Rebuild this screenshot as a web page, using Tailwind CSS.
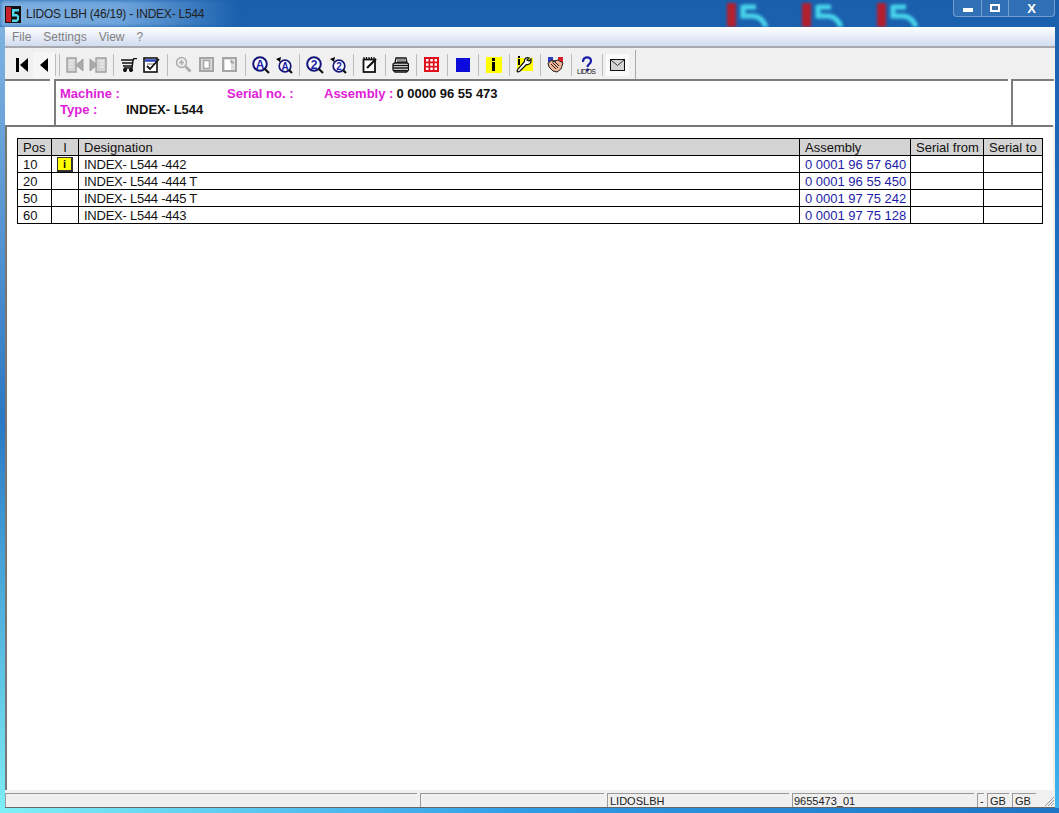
<!DOCTYPE html>
<html lang="en">
<head>
<meta charset="UTF-8">
<title>LIDOS LBH (46/19) - INDEX- L544</title>
<script src="https://cdn.jsdelivr.net/npm/@tailwindcss/browser@4"></script>
</head>
<body class="m-0 overflow-hidden bg-[#1b6fc0]">
<div class="relative w-[1059px] h-[813px] overflow-hidden flex flex-col font-['Liberation_Sans',Arial,sans-serif] text-[12px] text-black bg-gradient-to-b from-[#1a5fad] via-[#1f78c8] to-[#3fb4ec]">

  <!-- glass reflections behind the window -->
  <div class="absolute left-0 top-[27px] w-[5px] h-[786px] bg-gradient-to-b from-[#7fb2e0] via-[#2a78c4] to-[#7eeef5]"></div>
  <div class="absolute left-0 bottom-0 w-[1059px] h-[5px] bg-gradient-to-r from-[#7ff0f5] via-[#2f9be6] to-[#1d74c4]"></div>
  <div class="absolute left-[0px] top-[0px] w-[240px] h-[27px] bg-gradient-to-r from-[#7fb0e0] via-[#6fa5dc] to-transparent blur-[2px]"></div>
  <svg class="absolute left-[725px] top-0 w-[45px] h-[27px] blur-[1.5px]" viewBox="0 0 45 27" fill="none"><rect x="2" y="3" width="9" height="24" fill="#b3202e"/><path d="M18 7H31M18 5V16H27Q37 16 41 27" stroke="#48d5ec" stroke-width="5"/></svg>
  <svg class="absolute left-[800px] top-0 w-[45px] h-[27px] blur-[1.5px]" viewBox="0 0 45 27" fill="none"><rect x="2" y="3" width="9" height="24" fill="#b3202e"/><path d="M18 7H31M18 5V16H27Q37 16 41 27" stroke="#48d5ec" stroke-width="5"/></svg>
  <svg class="absolute left-[875px] top-0 w-[45px] h-[27px] blur-[1.5px]" viewBox="0 0 45 27" fill="none"><rect x="2" y="3" width="9" height="24" fill="#b3202e"/><path d="M18 7H31M18 5V16H27Q37 16 41 27" stroke="#48d5ec" stroke-width="5"/></svg>

  <!-- title bar -->
  <div class="relative h-[27px] shrink-0 flex items-center pl-[5px]">
    <svg class="w-[16px] h-[17px] mt-[1px]" viewBox="0 0 16 17"><rect x="0" y="0" width="16" height="17" fill="#111"/><rect x="1" y="1" width="5" height="15" fill="#c8202a"/><path d="M7 3h7v2.500H9.500v2.500H12l2 2v4l-2 2H7v-2.500h4.500l.5-.5v-2l-.5-.5H7z" fill="#52d8ea"/></svg>
    <span class="ml-[5px] text-[12px] tracking-[-0.23px] text-[#222] mt-[1px]">LIDOS LBH (46/19) - INDEX- L544</span>
    <!-- window buttons -->
    <div class="absolute right-[4px] top-0 w-[102px] h-[17px] flex rounded-b-[4px] border border-t-0 border-[#8fb3d8]/70 bg-white/10">
      <div class="w-[28px] flex items-center justify-center border-r border-[#8fb3d8]/70"><div class="w-[10px] h-[4px] mt-[4px] bg-white"></div></div>
      <div class="w-[27px] flex items-center justify-center border-r border-[#8fb3d8]/70"><div class="w-[10px] h-[8px] border-2 border-white bg-[#3a6fa8]"></div></div>
      <div class="flex-1 flex items-center justify-center text-white font-bold text-[13px] leading-none">X</div>
    </div>
  </div>

  <!-- window -->
  <div class="relative ml-[5px] w-[1050px] h-[781px] shrink-0 flex flex-col bg-[#f0f0f0]">
    <!-- menu -->
    <div class="h-[21px] shrink-0 flex items-center pl-[7px] gap-[12px] bg-gradient-to-b from-[#fdfeff] to-[#d2dcef] border-b-2 border-[#a7a9ad] text-[#808080] text-[12px]">
      <span>File</span><span>Settings</span><span>View</span><span>?</span>
    </div>

    <!-- toolbar -->
    <div class="h-[31px] shrink-0 flex items-center pl-[5px] pt-[2px] bg-[#f0f0f0]">
      <div class="w-[23px] h-[24px] flex items-center justify-center">
        <svg class="w-[14px] h-[16px]" viewBox="0 0 14 16"><rect x="1" y="1" width="3" height="14"/><path d="M13 1v14L5 8z"/></svg>
      </div>
      <div class="w-[22px] h-[26px] flex items-center justify-center bg-white/40">
        <svg class="w-[10px] h-[16px]" viewBox="0 0 10 16"><path d="M9 1v14L1 8z"/></svg>
      </div>
      <div class="w-[1px] h-[22px] bg-[#bbb]"></div>
      <div class="w-[1px] h-[22px] ml-[3px] mr-[3px] bg-[#bbb]"></div>

      <div class="w-[23px] flex justify-center"><svg class="w-[18px] h-[18px]" viewBox="0 0 18 18" fill="none" stroke="#a0a0a0"><path d="M1 2h9v14H1z" fill="#d4d4d4" stroke-width="1.400"/><path d="M3 5h5M3 8h4M3 11h4" stroke="#f4f4f4" stroke-width="1.200"/><path d="M17 3v12l-7-6z" fill="#aaa"/></svg></div>
      <div class="w-[23px] flex justify-center"><svg class="w-[18px] h-[18px]" viewBox="0 0 18 18" fill="none" stroke="#a0a0a0"><path d="M7 2h10v14H7z" fill="#d4d4d4" stroke-width="1.400"/><path d="M10 5h5M11 8h4M11 11h4" stroke="#f4f4f4" stroke-width="1.200"/><path d="M1 3v12l7-6z" fill="#aaa"/></svg></div>
      <div class="w-[1px] h-[22px] ml-[4px] mr-[3px] bg-[#bbb]"></div>

      <div class="w-[23px] flex justify-center"><svg class="w-[16px] h-[14px]" viewBox="0 0 16 14" fill="none" stroke="#111" stroke-width="1.500"><path d="M0 2h12M1 5h11M2 8h9"/><path d="M12 2l1-1.500h3"/><path d="M12 2l-1 8H3"/><circle cx="4" cy="12" r="1.300" fill="#111"/><circle cx="10" cy="12" r="1.300" fill="#111"/></svg></div>
      <div class="w-[23px] flex justify-center"><svg class="w-[17px] h-[16px]" viewBox="0 0 17 16" fill="none"><rect x="1" y="1" width="13" height="14" stroke="#111" stroke-width="1.600" fill="#fff"/><path d="M2 3.500h11" stroke="#2a3fc0" stroke-width="2.500"/><path d="M4 7h8" stroke="#777"/><path d="M4 9l3 3 9-10" stroke="#111" stroke-width="1.800"/></svg></div>
      <div class="w-[1px] h-[22px] mx-[4px] bg-[#bbb]"></div>

      <div class="w-[23px] flex justify-center"><svg class="w-[17px] h-[17px]" viewBox="0 0 17 17" fill="none" stroke="#aaa"><circle cx="6.500" cy="6.500" r="5" fill="#eee" stroke-width="1.400"/><path d="M4 6.500h5M6.500 4v5" stroke-width="1.500"/><path d="M10.500 10.500l5 5" stroke-width="2.600"/></svg></div>
      <div class="w-[23px] flex justify-center"><svg class="w-[15px] h-[15px]" viewBox="0 0 15 15" fill="none" stroke="#a5a5a5"><rect x="1" y="1" width="13" height="13" stroke-width="2" fill="#dedede"/><rect x="4.500" y="3.500" width="6" height="8" fill="#fff" stroke-width="1.500"/></svg></div>
      <div class="w-[23px] flex justify-center"><svg class="w-[15px] h-[15px]" viewBox="0 0 15 15" fill="none" stroke="#a5a5a5"><rect x="1" y="1" width="13" height="13" stroke-width="2" fill="#dedede"/><path d="M3 3h6v10H3z" fill="#fff" stroke="none"/><path d="M9 3l3 3H9z" fill="#aaa"/></svg></div>
      <div class="w-[1px] h-[22px] ml-[4px] mr-[3px] bg-[#bbb]"></div>

      <div class="w-[23px] flex justify-center"><svg class="w-[18px] h-[18px]" viewBox="0 0 18 18"><circle cx="8" cy="8" r="6.800" fill="#fff" stroke="#14147a" stroke-width="2"/><text x="8" y="12.500" text-anchor="middle" font-size="12" font-weight="700" fill="#1a1ea8" font-family="Liberation Sans">A</text><path d="M12.500 12.500l4.500 4.500" stroke="#111" stroke-width="2.200"/></svg></div>
      <div class="w-[23px] flex justify-center"><svg class="w-[18px] h-[18px]" viewBox="0 0 18 18"><circle cx="10" cy="10" r="5.800" fill="#fff" stroke="#14147a" stroke-width="1.700"/><text x="10" y="13.500" text-anchor="middle" font-size="10" font-weight="700" fill="#1a1ea8" font-family="Liberation Sans">A</text><path d="M14 14l3 3" stroke="#111" stroke-width="2.200"/><path d="M1 3l5-2-1 5z"/></svg></div>
      <div class="w-[1px] h-[22px] ml-[4px] mr-[3px] bg-[#bbb]"></div>

      <div class="w-[23px] flex justify-center"><svg class="w-[18px] h-[18px]" viewBox="0 0 18 18"><circle cx="8" cy="8" r="6.800" fill="#fff" stroke="#14147a" stroke-width="2"/><text x="8" y="12.500" text-anchor="middle" font-size="12" font-weight="700" fill="#1a1ea8" font-family="Liberation Sans">2</text><path d="M12.500 12.500l4.500 4.500" stroke="#111" stroke-width="2.200"/></svg></div>
      <div class="w-[23px] flex justify-center"><svg class="w-[18px] h-[18px]" viewBox="0 0 18 18"><circle cx="10" cy="10" r="5.800" fill="#fff" stroke="#14147a" stroke-width="1.700"/><text x="10" y="13.500" text-anchor="middle" font-size="10" font-weight="700" fill="#1a1ea8" font-family="Liberation Sans">2</text><path d="M14 14l3 3" stroke="#111" stroke-width="2.200"/><path d="M1 3l5-2-1 5z"/></svg></div>
      <div class="w-[1px] h-[22px] mx-[4px] bg-[#bbb]"></div>

      <div class="w-[23px] flex justify-center"><svg class="w-[16px] h-[16px]" viewBox="0 0 16 16" fill="none" stroke="#111"><rect x="1.500" y="2.500" width="11.500" height="12.500" stroke-width="1.800" fill="#fff"/><path d="M2 0v2M4.500 0v2M7 0v2M9.500 0v2M12 0v2" stroke-width="1.200"/><path d="M5 11l9-9" stroke-width="2.200"/></svg></div>
      <div class="w-[1px] h-[22px] ml-[4px] mr-[3px] bg-[#bbb]"></div>

      <div class="w-[23px] flex justify-center"><svg class="w-[17px] h-[16px]" viewBox="0 0 17 16" fill="none" stroke="#111" stroke-width="1.300"><path d="M4 1h10l1 5H3z" fill="#fff"/><path d="M5 3h8M5 4.800h9" stroke-width=".9"/><path d="M1 7l2-1h12l1.500 1v6l-2 2H3l-2-2z" fill="#fff"/><path d="M1 8.500h15.500M1 11h15.500M2 13.500h13" stroke-width="1.500"/></svg></div>
      <div class="w-[1px] h-[22px] ml-[4px] mr-[3px] bg-[#bbb]"></div>

      <div class="w-[23px] flex justify-center"><svg class="w-[15px] h-[15px]" viewBox="0 0 15 15"><rect width="15" height="15" fill="#e0101a"/><g fill="#fff"><rect x="2" y="2" width="2.500" height="2.500"/><rect x="6.300" y="2" width="2.500" height="2.500"/><rect x="10.500" y="2" width="2.500" height="2.500"/><rect x="2" y="6.300" width="2.500" height="2.500"/><rect x="6.300" y="6.300" width="2.500" height="2.500"/><rect x="10.500" y="6.300" width="2.500" height="2.500"/><rect x="2" y="10.500" width="2.500" height="2.500"/><rect x="6.300" y="10.500" width="2.500" height="2.500"/><rect x="10.500" y="10.500" width="2.500" height="2.500"/></g></svg></div>
      <div class="w-[1px] h-[22px] ml-[4px] mr-[3px] bg-[#bbb]"></div>

      <div class="w-[23px] flex justify-center"><svg class="w-[14px] h-[14px]" viewBox="0 0 14 14"><rect width="14" height="14" fill="#0a0ae0"/><g fill="#26269a"><rect x="1" y="1" width="1" height="1"/><rect x="4" y="1" width="1" height="1"/><rect x="7" y="1" width="1" height="1"/><rect x="10" y="1" width="1" height="1"/><rect x="12" y="3" width="1" height="1"/><rect x="12" y="6" width="1" height="1"/><rect x="12" y="9" width="1" height="1"/><rect x="1" y="4" width="1" height="1"/><rect x="1" y="7" width="1" height="1"/><rect x="1" y="10" width="1" height="1"/><rect x="3" y="12" width="1" height="1"/><rect x="6" y="12" width="1" height="1"/><rect x="9" y="12" width="1" height="1"/><rect x="12" y="12" width="1" height="1"/></g></svg></div>
      <div class="w-[1px] h-[22px] ml-[4px] mr-[3px] bg-[#bbb]"></div>

      <div class="w-[23px] flex justify-center"><div class="w-[16px] h-[16px] bg-[#ffff00] flex flex-col items-center pt-[1px]"><div class="w-[3px] h-[3px] bg-black"></div><div class="w-[3px] h-[9px] bg-black mt-[1px]"></div></div></div>
      <div class="w-[1px] h-[22px] ml-[4px] mr-[3px] bg-[#bbb]"></div>

      <div class="w-[23px] flex justify-center"><svg class="w-[17px] h-[17px]" viewBox="0 0 17 17"><rect x="1" y="2" width="16" height="13" fill="#ffff00"/><rect x="2" y="0" width="2" height="2"/><rect x="2" y="3" width="2" height="6"/><path d="M15 3l-2 2-2-1 2-2c-3-1-5 1-4.500 3.500L2 13l-1 2 1 1 2-1 6.500-6.500C13 9 16 7 15 3z" fill="#fff" stroke="#111" stroke-width="1.200"/></svg></div>
      <div class="w-[1px] h-[22px] ml-[4px] mr-[3px] bg-[#bbb]"></div>

      <div class="w-[23px] flex justify-center"><svg class="w-[17px] h-[16px]" viewBox="0 0 17 16"><path d="M1 0h5v6H1z" fill="#2a3fc0"/><path d="M11 0h5v6h-5z" fill="#d8202a"/><path d="M6 0h5v3H6z" fill="#eee"/><path d="M1 6l4-3 3 1 3-1 5 3-2 6-4 3-4-1-4-4z" fill="#eeb494" stroke="#222"/><path d="M4 7l5 5M6 6l5 5M8 5l4 4M5 5l4-1" stroke="#222" fill="none"/></svg></div>
      <div class="w-[1px] h-[22px] ml-[4px] mr-[3px] bg-[#bbb]"></div>

      <div class="w-[23px] flex justify-center"><svg class="w-[19px] h-[18px]" viewBox="0 0 19 18"><path d="M6 6c0-6 8-6 8-1 0 3-3.500 3-3.500 6" fill="none" stroke="#1a1ea8" stroke-width="2.200"/><circle cx="10.500" cy="13.800" r="1.500" fill="#1a1ea8"/><text x="0" y="18" font-size="7" fill="#111" font-family="Liberation Sans" textLength="19">LIDOS</text></svg></div>
      <div class="w-[1px] h-[22px] ml-[4px] mr-[3px] bg-[#bbb]"></div>

      <div class="w-[23px] h-[22px] flex items-center justify-center bg-white/70"><svg class="w-[15px] h-[12px]" viewBox="0 0 15 12"><rect x=".5" y=".5" width="14" height="11" fill="#d4d4d4" stroke="#111"/><path d="M1 1l6.500 5.500L14 1" fill="none" stroke="#333"/></svg></div>
      <div class="w-[1px] h-[29px] ml-[6px] bg-[#a9a9a9]"></div>
    </div>

    <!-- machine header -->
    <div class="h-[46px] shrink-0 flex items-stretch bg-white">
      <div class="w-[45px] border-t-2 border-[#7d7d7d] mr-[4px]"></div>
      <div class="w-[954px] border-t-2 border-l-2 border-[#7d7d7d] pl-[4px] pt-[5px] text-[13px] leading-[16px] font-bold">
        <div class="flex">
          <span class="w-[167px] text-[#e020d8]">Machine :</span>
          <span class="w-[97px] text-[#e020d8]">Serial no. :</span>
          <span class="text-[#e020d8]">Assembly :</span>
          <span class="ml-[3px] text-[#111]">0 0000 96 55 473</span>
        </div>
        <div class="flex">
          <span class="w-[66px] text-[#e020d8]">Type :</span>
          <span class="text-[#111]">INDEX- L544</span>
        </div>
      </div>
      <div class="w-[43px] ml-[3px] border-t-2 border-l-2 border-[#7d7d7d]"></div>
    </div>

    <!-- list -->
    <div class="flex-1 min-h-0 bg-white mr-[2px] border-t-2 border-l-2 border-[#777] pt-[11px] pl-[10px]">
      <table class="border-collapse table-fixed w-[1025px] text-[13px] leading-[14px] text-[#111] [&_td]:pt-[2px]">
        <colgroup><col class="w-[34px]"><col class="w-[27px]"><col class="w-[721px]"><col class="w-[111px]"><col class="w-[73px]"><col class="w-[59px]"></colgroup>
        <thead>
          <tr class="h-[17px] bg-[#d4d4d4]">
            <td class="border border-black pl-[5px] p-0">Pos</td>
            <td class="border border-black p-0 text-center">I</td>
            <td class="border border-black pl-[5px] p-0">Designation</td>
            <td class="border border-black pl-[5px] p-0">Assembly</td>
            <td class="border border-black pl-[5px] p-0">Serial from</td>
            <td class="border border-black pl-[5px] p-0">Serial to</td>
          </tr>
        </thead>
        <tbody>
          <tr class="h-[17px]">
            <td class="border border-black pl-[5px] p-0">10</td>
            <td class="border border-black p-0 pt-0!"><div class="w-[16px] h-[15px] mx-auto bg-[#ffff00] border border-[#333] border-b-2 border-r-2 text-[11px] leading-[12px] font-bold text-center">i</div></td>
            <td class="border border-black pl-[5px] p-0 tracking-[-0.25px]">INDEX- L544 -442</td>
            <td class="border border-black pl-[5px] p-0 text-[#1c1ca8]">0 0001 96 57 640</td>
            <td class="border border-black p-0"></td>
            <td class="border border-black p-0"></td>
          </tr>
          <tr class="h-[17px]">
            <td class="border border-black pl-[5px] p-0">20</td>
            <td class="border border-black p-0"></td>
            <td class="border border-black pl-[5px] p-0 tracking-[-0.25px]">INDEX- L544 -444 T</td>
            <td class="border border-black pl-[5px] p-0 text-[#1c1ca8]">0 0001 96 55 450</td>
            <td class="border border-black p-0"></td>
            <td class="border border-black p-0"></td>
          </tr>
          <tr class="h-[17px]">
            <td class="border border-black pl-[5px] p-0">50</td>
            <td class="border border-black p-0"></td>
            <td class="border border-black pl-[5px] p-0 tracking-[-0.25px]">INDEX- L544 -445 T</td>
            <td class="border border-black pl-[5px] p-0 text-[#1c1ca8]">0 0001 97 75 242</td>
            <td class="border border-black p-0"></td>
            <td class="border border-black p-0"></td>
          </tr>
          <tr class="h-[17px]">
            <td class="border border-black pl-[5px] p-0">60</td>
            <td class="border border-black p-0"></td>
            <td class="border border-black pl-[5px] p-0 tracking-[-0.25px]">INDEX- L544 -443</td>
            <td class="border border-black pl-[5px] p-0 text-[#1c1ca8]">0 0001 97 75 128</td>
            <td class="border border-black p-0"></td>
            <td class="border border-black p-0"></td>
          </tr>
        </tbody>
      </table>
    </div>

    <!-- status bar -->
    <div class="h-[18px] shrink-0 flex items-stretch gap-[3px] pt-[3px] bg-[#f0f0f0] text-[11px] leading-[15px] text-[#222] border-b border-[#666]">
      <div class="w-[412px] border-t border-l border-[#999]"></div>
      <div class="w-[184px] border-t border-l border-[#999]"></div>
      <div class="w-[182px] border-t border-l border-[#999] pl-[2px]">LIDOSLBH</div>
      <div class="w-[182px] border-t border-l border-[#999] pl-[1px]">9655473_01</div>
      <div class="w-[7px] border-t border-l border-[#999] pl-[2px]">-</div>
      <div class="w-[22px] border-t border-l border-[#999] pl-[2px]">GB</div>
      <div class="w-[24px] border-t border-l border-[#999] pl-[2px]">GB</div>
      <div class="flex-1 flex items-end justify-end">
        <svg class="w-[12px] h-[12px]" viewBox="0 0 12 12" fill="none" stroke="#999"><path d="M11 2L2 11M11 5L5 11M11 8L8 11"/></svg>
      </div>
    </div>
  </div>
</div>
</body>
</html>
